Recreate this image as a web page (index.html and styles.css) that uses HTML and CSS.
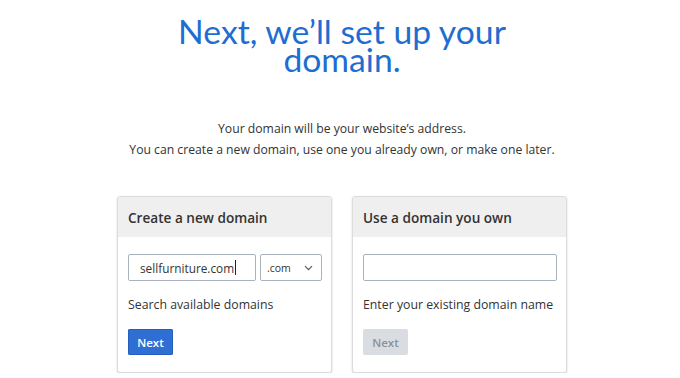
FILE: index.html
```html
<!DOCTYPE html>
<html>
<head>
<meta charset="utf-8">
<link rel="stylesheet" href="styles.css">
</head>
<body>
<main class="page">
  <h1 class="title"><span class="title-line">Next, we’ll set up your</span><span class="title-line">domain.</span></h1>
  <p class="intro">Your domain will be your website’s address.<br>You can create a new domain, use one you already own, or make one later.</p>
  <div class="cards">
    <section class="card">
      <header class="card-head">Create a new domain</header>
      <div class="card-body">
        <div class="field-row">
          <div class="input input-text">sellfurniture.com<span class="caret"></span></div>
          <div class="input input-select">.com
            <svg class="chev" width="9" height="6" viewBox="0 0 9 6"><path d="M1 1.2l3.5 3.5 3.5-3.5" fill="none" stroke="#555" stroke-width="1.2"/></svg>
          </div>
        </div>
        <p class="hint">Search available domains</p>
        <button class="btn btn-primary">Next</button>
      </div>
    </section>
    <section class="card">
      <header class="card-head">Use a domain you own</header>
      <div class="card-body">
        <div class="field-row">
          <div class="input input-full"></div>
        </div>
        <p class="hint">Enter your existing domain name</p>
        <button class="btn btn-disabled">Next</button>
      </div>
    </section>
  </div>
</main>
</body>
</html>
```

FILE: styles.css
```css
html, body {
  margin: 0;
  padding: 0;
  background: #ffffff;
}
body {
  font-family: "Open Sans", "Liberation Sans", sans-serif;
  color: #333333;
}
.page {
  display: flex;
  flex-direction: column;
  align-items: center;
  padding-left: 4px;
  padding-top: 17px;
}
.title {
  margin: 0;
  font-family: Lato, "Open Sans", sans-serif;
  font-weight: 400;
  font-size: 33.7px;
  line-height: 28px;
  color: #1e6dd2;
  text-align: center;
}
.title-line {
  display: block;
}
.intro {
  margin: 45px 0 0 0;
  font-size: 12.2px;
  line-height: 21px;
  text-align: center;
  color: #333;
}
.cards {
  display: flex;
  gap: 20px;
  margin-top: 36px;
}
.card {
  width: 213px;
  height: 175px;
  border: 1px solid #dcdcdc;
  border-radius: 3px;
  box-shadow: 0 1px 2px rgba(0,0,0,0.18);
  background: #fff;
  overflow: hidden;
}
.card-head {
  background: #efefef;
  height: 40px;
  display: flex;
  align-items: center;
  padding: 0 10px;
  font-size: 13.6px;
  font-weight: 600;
  color: #333;
}
.card-body {
  padding: 17px 10px 0 10px;
  display: flex;
  flex-direction: column;
  align-items: flex-start;
}
.field-row {
  display: flex;
  gap: 4px;
  width: 194px;
}
.input {
  box-sizing: border-box;
  height: 27px;
  border: 1px solid #a9b2bf;
  border-radius: 2px;
  font-size: 11.8px;
  color: #333;
  display: flex;
  align-items: center;
}
.input-text {
  width: 128px;
  padding-left: 11px;
}
.caret {
  display: inline-block;
  width: 1px;
  height: 15px;
  background: #222;
  margin-left: 1px;
}
.input-select {
  width: 62px;
  padding-left: 6px;
  padding-right: 8px;
  justify-content: space-between;
  font-size: 10.5px;
}
.input-full {
  width: 194px;
}
.hint {
  margin: 14px 0 0 0;
  font-size: 12.3px;
  line-height: 20px;
  color: #333;
  white-space: nowrap;
}
.btn {
  margin-top: 14px;
  width: 45px;
  height: 26px;
  border: none;
  border-radius: 2px;
  font-family: "Open Sans", sans-serif;
  font-size: 11.5px;
  font-weight: 600;
  padding: 0;
}
.btn-primary {
  background: #2f6fd3;
  color: #fff;
  box-shadow: inset 0 0 0 1px #245fbf;
}
.btn-disabled {
  background: #d9dde2;
  color: #8a9199;
}
```
